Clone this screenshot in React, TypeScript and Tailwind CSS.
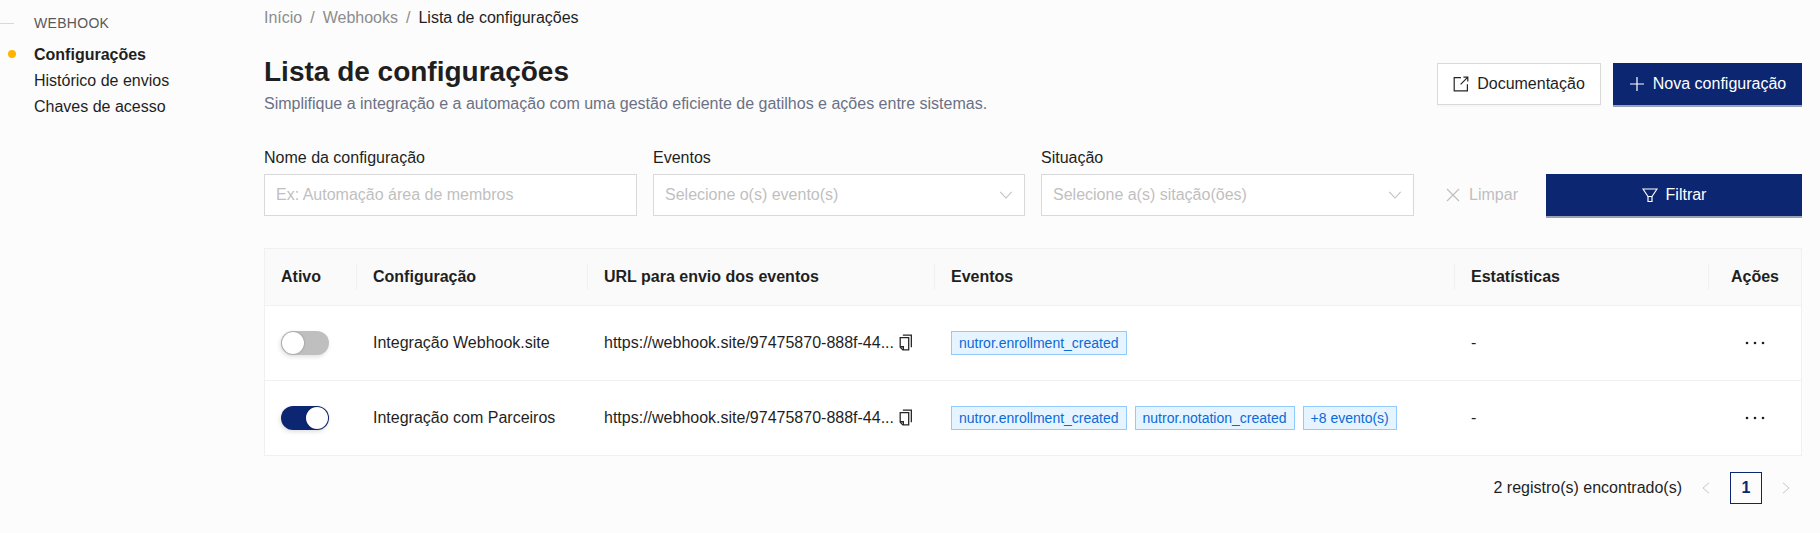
import React from "react";

const font = "font-['Liberation_Sans',Arial,sans-serif]";

const NAVY = "bg-[#0c2672]";

// thin line icons, drawn to match the picture
function Icon({ className, children }: { className?: string; children: React.ReactNode }) {
  return (
    <svg viewBox="0 0 16 16" fill="none" stroke="currentColor" strokeWidth="1.2" className={`shrink-0 ${className ?? ""}`}>
      {children}
    </svg>
  );
}

const ExportIcon = () => (
  <Icon className="h-4 w-4 text-[#262626]">
    <path d="M8 1.6H1.2v13.2h13.2V8.2" />
    <path d="M7.6 8.4 14.6 1.4M10.4 1.2h4.4v4.4" />
  </Icon>
);
const PlusIcon = () => (
  <Icon className="h-4 w-4">
    <path d="M8 1v14M1 8h14" />
  </Icon>
);
const CloseIcon = () => (
  <Icon className="h-4 w-4">
    <path d="M2 2l12 12M14 2 2 14" />
  </Icon>
);
const FilterIcon = () => (
  <Icon className="h-4 w-4">
    <path d="M1 2h14l-5 7.5H6L1 2Z" />
    <path d="M6 9.5V14.5h4V9.5" />
  </Icon>
);
const DownIcon = () => (
  <Icon className="h-[14px] w-[14px]">
    <path d="M1.5 4.5 8 11.5l6.5-7" />
  </Icon>
);
const CopyIcon = () => (
  <Icon className="h-[17px] w-[17px] text-[#262626]">
    <path d="M5.5 1h8v11.5" />
    <path d="M3 3.5h8V15H5.5L3 12.5V3.5Z" />
    <path d="M3 12h3v3" />
  </Icon>
);
const LeftIcon = () => (
  <Icon className="h-3 w-3 text-[#bfbfbf]">
    <path d="M12 1 4 8l8 7" />
  </Icon>
);
const RightIcon = () => (
  <Icon className="h-3 w-3 text-[#bfbfbf]">
    <path d="M4 1l8 7-8 7" />
  </Icon>
);
const DotsIcon = () => (
  <svg viewBox="0 0 24 6" className="mx-auto h-[6px] w-6 fill-[#1f1f1f]">
    <circle cx="4" cy="3" r="1.3" />
    <circle cx="12" cy="3" r="1.3" />
    <circle cx="20" cy="3" r="1.3" />
  </svg>
);

function Tag({ children }: { children: React.ReactNode }) {
  return (
    <span className="inline-flex h-6 items-center border border-[#91caff] bg-[#e6f4ff] px-[7px] text-sm text-[#0a6ad8]">
      {children}
    </span>
  );
}

function Toggle({ on }: { on?: boolean }) {
  return (
    <span
      className={`flex h-6 w-12 items-center rounded-full p-[1px] shadow-[-1px_2px_4px_rgba(0,0,0,0.12)] ${
        on ? `${NAVY} justify-end` : "bg-[#bfbfbf] justify-start"
      }`}
    >
      <span className="h-[22px] w-[22px] rounded-full bg-white shadow-[0_0_2px_rgba(0,0,0,0.35)]" />
    </span>
  );
}

function SelectBox({ label, placeholder, width }: { label: string; placeholder: string; width: string }) {
  return (
    <div className={`flex flex-col ${width}`}>
      <label className="mb-1 h-[24px] text-base leading-6 text-[#1f1f1f]">{label}</label>
      <div className="flex h-[42px] items-center justify-between border border-[#d9d9d9] bg-white px-[11px] text-base text-[#bfbfbf]">
        <span>{placeholder}</span>
        <DownIcon />
      </div>
    </div>
  );
}

function Th({ children, sep = true, center }: { children: React.ReactNode; sep?: boolean; center?: boolean }) {
  return (
    <th className={`relative px-4 text-base font-bold text-[#1f1f1f] ${center ? "text-center" : "text-left"}`}>
      {sep && <span className="absolute top-1/2 right-0 h-[26px] w-px -translate-y-1/2 bg-[#f0f0f0]" />}
      {children}
    </th>
  );
}

const rows = [
  { name: "Integração Webhook.site", on: false, tags: ["nutror.enrollment_created"] },
  {
    name: "Integração com Parceiros",
    on: true,
    tags: ["nutror.enrollment_created", "nutror.notation_created", "+8 evento(s)"],
  },
];

export default function App() {
  return (
    <div className={`${font} flex h-[533px] w-[1820px] overflow-hidden bg-[#fcfcfc] text-base text-[#1f1f1f]`}>
      {/* sidebar */}
      <aside className="w-[264px] shrink-0 pt-[12px]">
        <div className="flex h-[22px] items-center">
          <span className="h-px w-[14px] bg-[#d9d9d9]" />
          <span className="ml-5 text-sm tracking-[0.3px] text-[#595959]">WEBHOOK</span>
        </div>
        <nav className="mt-2 flex flex-col pl-[34px] leading-[26px]">
          <a className="relative font-bold">
            <span className="absolute top-2 -left-[26px] h-2 w-2 rounded-full bg-[#ffb400]" />
            Configurações
          </a>
          <a>Histórico de envios</a>
          <a>Chaves de acesso</a>
        </nav>
      </aside>

      <main className="w-[1538px] shrink-0">
        <div className="flex h-[35px] items-center gap-2 text-[#8c8c8c]">
          <span>Início</span>
          <span>/</span>
          <span>Webhooks</span>
          <span>/</span>
          <span className="text-[#1f1f1f]">Lista de configurações</span>
        </div>

        <div className="mt-[19px] flex items-start justify-between">
          <div>
            <h1 className="text-[28px] leading-[36px] font-bold text-[#1f1f1f]">Lista de configurações</h1>
            <p className="mt-[2px] leading-6 text-[#6b7185]">
              Simplifique a integração e a automação com uma gestão eficiente de gatilhos e ações entre sistemas.
            </p>
          </div>
          <div className="mt-[9px] flex gap-3">
            <button className="flex h-[42px] w-[164px] items-center justify-center gap-2 border border-[#d9d9d9] bg-white shadow-[0_2px_0_rgba(0,0,0,0.02)]">
              <ExportIcon />
              Documentação
            </button>
            <button className={`${NAVY} flex h-[44px] w-[189px] items-center justify-center gap-2 border-b-2 border-[#9aa3b5] text-white`}>
              <PlusIcon />
              Nova configuração
            </button>
          </div>
        </div>

        <div className="mt-[30px] flex items-start">
          <div className="flex w-[373px] flex-col">
            <label className="mb-1 h-[24px] leading-6">Nome da configuração</label>
            <div className="flex h-[42px] items-center border border-[#d9d9d9] bg-white px-[11px] text-[#bfbfbf]">
              Ex: Automação área de membros
            </div>
          </div>
          <div className="ml-4 flex gap-4">
            <SelectBox width="w-[372px]" label="Eventos" placeholder="Selecione o(s) evento(s)" />
            <SelectBox width="w-[373px]" label="Situação" placeholder="Selecione a(s) sitação(ões)" />
          </div>
          <div className="mt-7 ml-4 flex h-[42px] w-[100px] items-center justify-center gap-2 pl-[3px] text-[#bfbfbf]">
            <CloseIcon />
            Limpar
          </div>
          <button className={`${NAVY} mt-7 ml-[16px] flex h-[44px] flex-1 items-center justify-center gap-2 border-b-2 border-[#9aa3b5] text-white`}>
            <FilterIcon />
            Filtrar
          </button>
        </div>

        <div className="mt-[30px] border border-[#f0f0f0] bg-white">
          <table className="w-full table-fixed border-collapse">
            <colgroup>
              <col className="w-[92px]" />
              <col className="w-[231px]" />
              <col className="w-[347px]" />
              <col className="w-[520px]" />
              <col className="w-[254px]" />
              <col />
            </colgroup>
            <thead>
              <tr className="h-[56px] border-b border-[#f0f0f0] bg-[#fafafa]">
                <Th>Ativo</Th>
                <Th>Configuração</Th>
                <Th>URL para envio dos eventos</Th>
                <Th>Eventos</Th>
                <Th>Estatísticas</Th>
                <Th sep={false} center>
                  Ações
                </Th>
              </tr>
            </thead>
            <tbody>
              {rows.map((r, i) => (
                <tr key={r.name} className={`h-[75px] ${i === 0 ? "border-b border-[#f0f0f0]" : ""}`}>
                  <td className="px-4">
                    <Toggle on={r.on} />
                  </td>
                  <td className="px-4">{r.name}</td>
                  <td className="px-4">
                    <span className="flex items-center gap-[3px] whitespace-nowrap">
                      https://webhook.site/97475870-888f-44...
                      <CopyIcon />
                    </span>
                  </td>
                  <td className="px-4">
                    <div className="flex gap-2">
                      {r.tags.map((t) => (
                        <Tag key={t}>{t}</Tag>
                      ))}
                    </div>
                  </td>
                  <td className="px-4">-</td>
                  <td className="px-4 text-center">
                    <DotsIcon />
                  </td>
                </tr>
              ))}
            </tbody>
          </table>
        </div>

        <div className="mt-4 flex items-center justify-end">
          <span className="mr-[18px]">2 registro(s) encontrado(s)</span>
          <LeftIcon />
          <span className="mx-[18px] flex h-8 w-8 items-center justify-center border border-[#0c2672] font-bold text-[#0c2672]">
            1
          </span>
          <span className="mr-[10px]">
            <RightIcon />
          </span>
        </div>
      </main>
    </div>
  );
}
